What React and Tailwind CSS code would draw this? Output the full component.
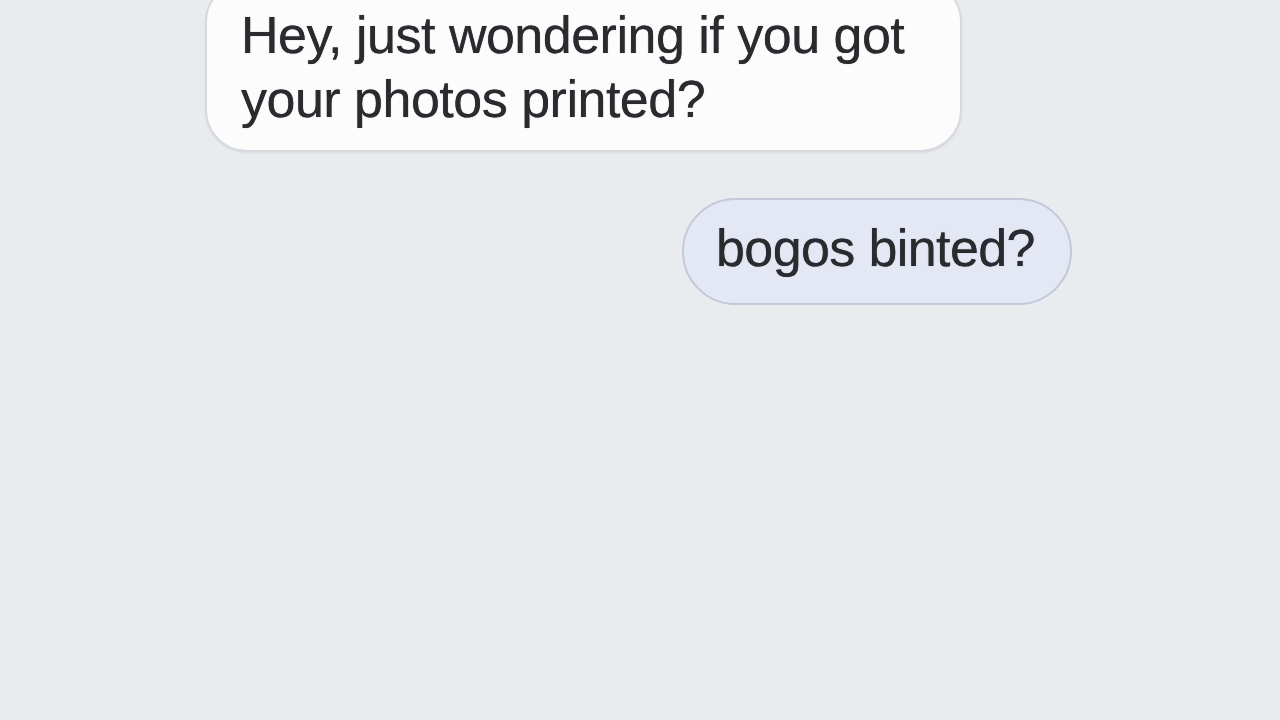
import React from "react";

export default function App() {
  return (
    <div
      className="w-[1280px] h-[720px] overflow-hidden bg-[#e9ebef] text-[#2a2b2f]"
      style={{ fontFamily: '"Liberation Sans", Arial, sans-serif' }}
    >
      <div className="flex flex-col">
        <div className="ml-[205px] -mt-[20px] w-[757px] rounded-[42px] border-2 border-[#d6d9de] bg-[#fcfcfd] pl-[34px] pt-[21px] pb-[19px] shadow-[0_1px_2px_rgba(0,0,0,0.08)]">
          <p className="text-[52px] leading-[64px] tracking-[-0.5px] [text-shadow:0_0_0.7px_#2a2b2f]">
            Hey, just wondering if you got
            <br />
            your photos printed?
          </p>
        </div>
        <div className="ml-[682px] mt-[46px] flex h-[107px] w-[390px] items-start rounded-full border-2 border-[#c3c9d6] bg-[#e3e8f4] pl-[32px] pt-[16px]">
          <p className="text-[52px] leading-[64px] tracking-[-0.6px] [text-shadow:0_0_0.7px_#2a2b2f]">bogos binted?</p>
        </div>
      </div>
    </div>
  );
}
